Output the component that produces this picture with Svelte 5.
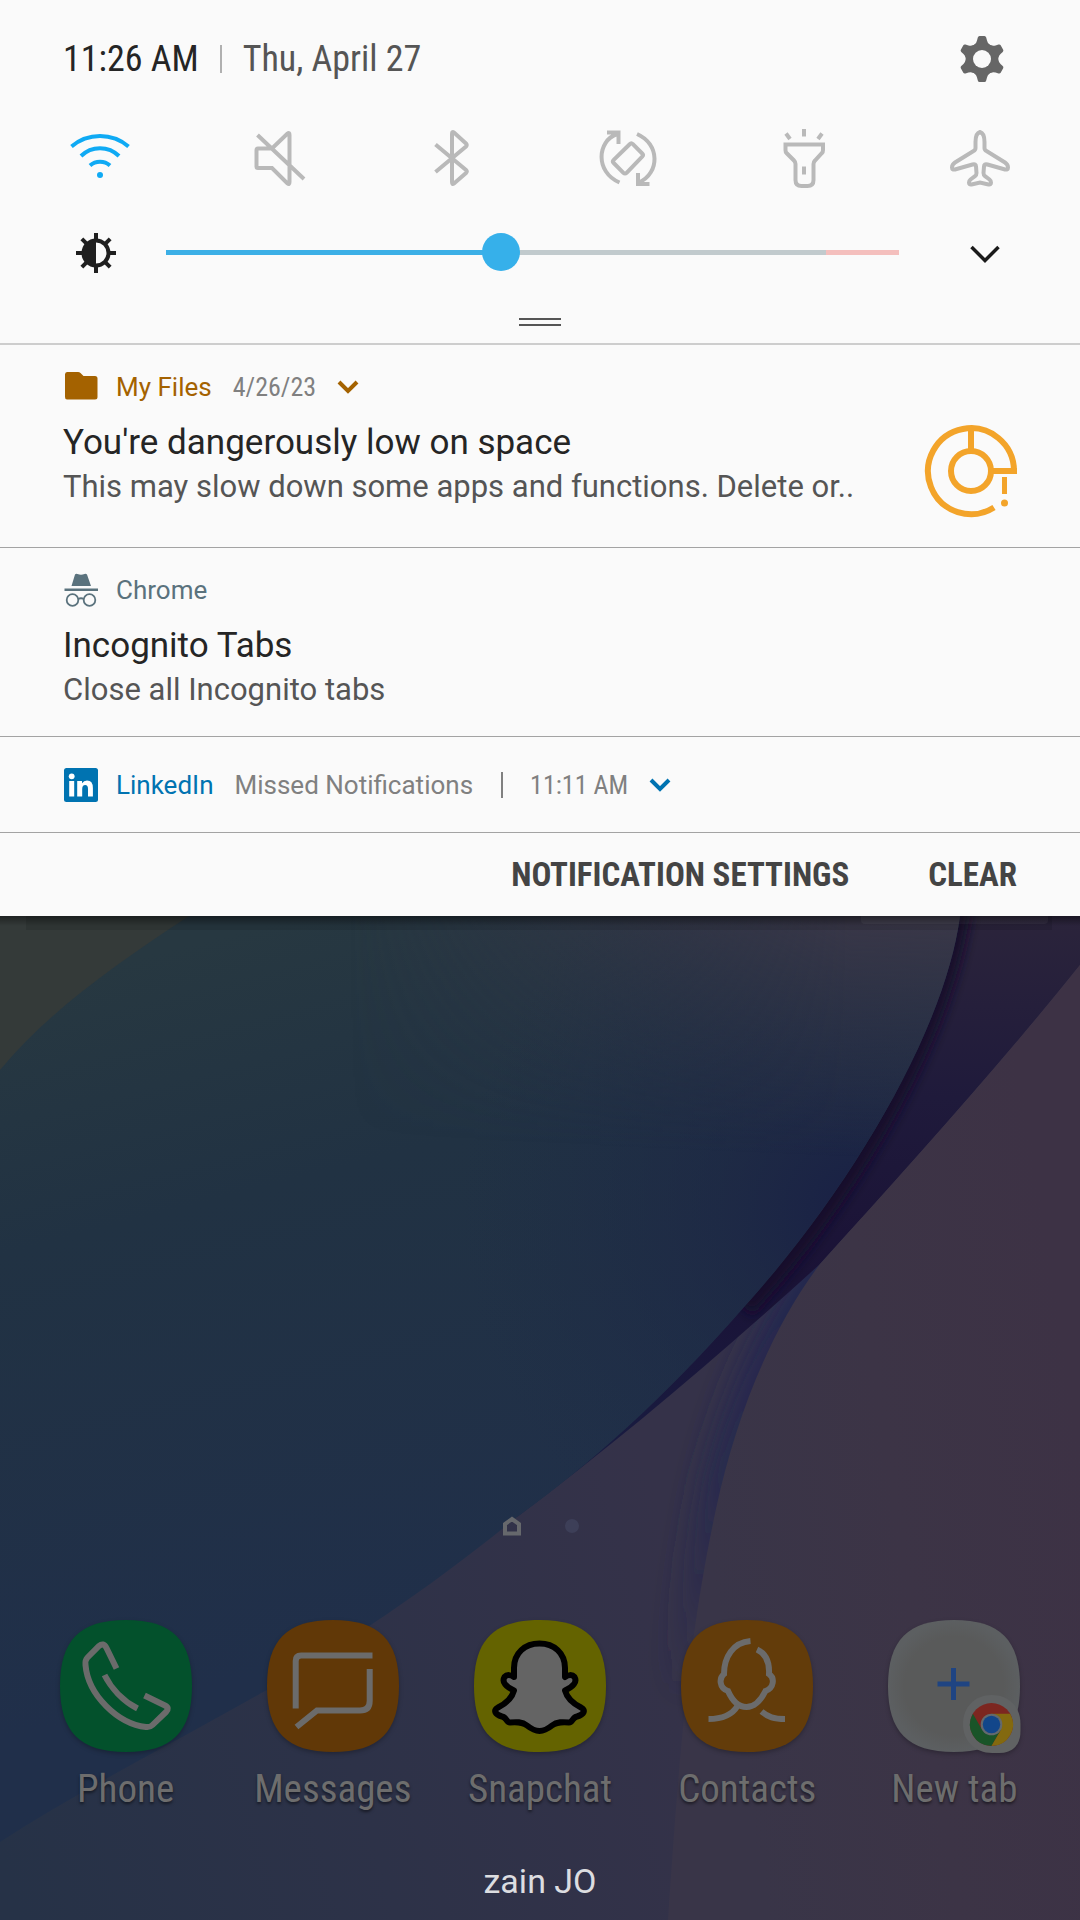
<script lang="ts">
    type App = {
        id: string;
        label: string;
        color: string;
    };

    const toggles = [
        { id: "wifi", label: "Wi-Fi", on: true },
        { id: "mute", label: "Mute", on: false },
        { id: "bluetooth", label: "Bluetooth", on: false },
        { id: "rotate", label: "Auto rotate", on: false },
        { id: "torch", label: "Flashlight", on: false },
        { id: "airplane", label: "Airplane mode", on: false },
    ];

    const apps: App[] = [
        { id: "phone", label: "Phone", color: "#03512c" },
        { id: "messages", label: "Messages", color: "#613807" },
        { id: "snapchat", label: "Snapchat", color: "#646300" },
        { id: "contacts", label: "Contacts", color: "#633c0a" },
        { id: "newtab", label: "New tab", color: "url(#paper)" },
    ];

    let brightness = $state(455);
    let level = $derived(brightness / 10);
</script>

{#snippet chevron()}
    <svg class="chevron" viewBox="0 0 22 14" aria-hidden="true">
        <path d="M2 2l9 9 9-9" />
    </svg>
{/snippet}

{#snippet toggleIcon(id: string)}
    <svg class="toggle_icon" viewBox="0 0 64 64" aria-hidden="true">
        {#if id === "wifi"}
            <path d="M3.500 20.500A44 44 0 0 1 60.500 20.500M13 30A27 27 0 0 1 51 30M22 39.500A15 15 0 0 1 42 39.500" />
            <circle class="solid" cx="32" cy="49" r="3" />
        {:else if id === "mute"}
            <path d="M14 22.500H28L43.500 7.500Q45.500 6 45.500 9V56Q45.500 59 43.500 57.500L28 42H14Q12.500 42 12.500 40.500V24Q12.500 22.500 14 22.500ZM13.500 9L60 53" />
        {:else if id === "bluetooth"}
            <path d="M15.500 18.500L46 44Q47.500 45.500 46 47L34 57.500Q32 59 32 56V8Q32 5 34 6.500L46 17.500Q47.500 19 46 20.500L15.500 46" />
        {:else if id === "rotate"}
            <path d="M23.500 56.500C-1 46 1 15 21 8M11 6.500H22.500V18M41 8C64 18 64 47 43 56.500M42 47V58H53.500" />
            <path d="M33.700 18.200Q35.300 16.600 36.900 18.200L46.200 27.500Q47.800 29.100 46.200 30.700L30.600 46.800Q29 48.400 27.400 46.800L17.700 37Q16.100 35.400 17.700 33.800Z" />
        {:else if id === "torch"}
            <path d="M13.500 18.500H51V24Q51 26 50 27L43 34.500Q41.500 36 41.500 38V54Q41.500 60 35.500 60H29.500Q23.500 60 23.500 54V38Q23.500 36 22 34.500L14.500 27Q13.500 26 13.500 24ZM32 40.500V48.500M32 3V10.500M14 7.500L18 13M50 7.500L46 13" />
        {:else}
            <path d="M32 6C28.500 7 27.500 12 27.500 16V22Q27.500 24 25.500 25L7 36.500Q4 38.500 4 41.500Q4 44 7 43.500L24.500 38.500Q28 37.500 28 40.500L28.500 47Q28.500 49 27 50.200L22.500 53.500Q21 54.700 21 56.500Q21 59 23.500 58.500L32 56.500L40.500 58.500Q43 59 43 56.500Q43 54.700 41.500 53.500L37 50.200Q35.500 49 35.500 47L36 40.500Q36 37.500 39.500 38.500L57 43.500Q60 44 60 41.500Q60 38.500 57 36.500L38.500 25Q36.500 24 36.500 22V16C36.500 12 35.500 7 32 6Z" />
        {/if}
    </svg>
{/snippet}

{#snippet appIcon(app: App)}
    <svg class="app_icon" viewBox="0 0 132 132" aria-hidden="true">
        <path fill={app.color} d="M66 0C112 0 132 20 132 66S112 132 66 132 0 112 0 66 20 0 66 0Z" />
        {#if app.id === "phone"}
            <g class="glyph">
                <path d="M56.500 48.500L46.500 28Q43.500 22 39 26L27.500 37.500Q25 40 25.500 45C28 75 58 104 86 107Q90 107.500 92.500 105L106 92Q110 88 105 85.500L84.500 75.500" />
                <path d="M44.500 55C51 68 63 81 77.500 88.500" />
            </g>
        {:else if app.id === "messages"}
            <g class="glyph">
                <path d="M105.500 35.500H34Q28.700 35.500 28.700 41V88.500" />
                <path d="M102.700 49V81Q102.700 90.500 93 90.500H50L29.500 107" />
            </g>
        {:else if app.id === "snapchat"}
            <path
                class="ghost"
                d="M65.500 23.500C51 23.500 40 33 40 48V57C37 55 33 54 30.500 57C27.500 62 32 67 40 70.500C38 78 31 84 24 87.500C19 90.500 21 94.500 28 96.500C33 97.500 32 102.500 36 102.500C42 102 48 101.500 53 105.500C58 109.500 61 111 65.500 111S73 109.500 78 105.500C83 101.500 89 102 95 102.500C99 102.500 98 97.500 103 96.500C110 94.500 112 90.500 107 87.500C100 84 93 78 91 70.500C99 67 103.500 62 100.500 57C98 54 94 55 91 57V48C91 33 80 23.500 65.500 23.500Z"
            />
        {:else if app.id === "contacts"}
            <g class="glyph">
                <path d="M69.500 21C52 22.500 43 37 43 54C38 58 38 68 47 71C51 80 57 87 65.500 87S80 80 84.500 71C93 68 94 58 88 54C88.500 44 86 34 76 29.500" />
                <path d="M56.500 86C51 95 42 99 27.500 99M80.500 91.500C87 97 93 99 104 99" />
            </g>
        {:else}
            <defs>
                <radialGradient id="paper">
                    <stop offset=".75" stop-color="#595a5a" />
                    <stop offset="1" stop-color="#5c5f61" />
                </radialGradient>
            </defs>
            <path class="plus" d="M65.500 48V80M49.500 64H81.500" />
            <path fill="#606263" d="M103.500 75C122 75 132.500 88 132.500 104V111C132.500 125 125 133 111 133H104C87 133 75 121 75 104S87 75 103.500 75Z" />
            <circle cx="103.500" cy="104.500" r="21.500" fill="#7c2620" />
            <path fill="#195428" d="M84.900 93.700A21.500 21.500 0 0 0 103.500 126L112.800 109.900L94.200 109.900Z" />
            <path fill="#83690f" d="M122.100 93.700A21.500 21.500 0 0 1 103.500 126L112.800 109.900L103.500 93.700Z" />
            <circle cx="103.500" cy="104.500" r="10.800" fill="#63696e" />
            <circle cx="103.500" cy="104.500" r="8.700" fill="#12468a" />
        {/if}
    </svg>
{/snippet}

<div class="screen">
    <div class="shade">
        <!-- Quick settings -->
        <header class="quick">
            <div class="status">
                <span class="status_time">11:26 AM</span>
                <span class="status_rule"></span>
                <span class="status_date">Thu, April 27</span>
                <button class="icon-button status_settings" aria-label="Settings">
                    <svg viewBox="-24 -24 48 48" aria-hidden="true">
                        {#each [0, 60, 120, 180, 240, 300] as angle}
                            <path
                                fill="#666"
                                transform="rotate({angle})"
                                d="M0 0L-11.500-12.500Q-6-14-5-18.500L-4.200-21.500Q-3.800-23-2.500-23H2.500Q3.800-23 4.200-21.500L5-18.500Q6-14 11.500-12.500Z"
                            />
                        {/each}
                        <circle r="9" fill="#fafafa" />
                    </svg>
                </button>
            </div>

            <div class="toggles">
                {#each toggles as toggle}
                    <button class="toggle" class:toggle-on={toggle.on} aria-label={toggle.label} aria-pressed={toggle.on}>
                        {@render toggleIcon(toggle.id)}
                    </button>
                {/each}
            </div>

            <div class="brightness">
                <svg class="brightness_icon" viewBox="-24 -24 48 48" aria-hidden="true">
                    <circle r="12.500" fill="none" stroke="#1f1f1f" stroke-width="4" />
                    <path d="M0-13A13 13 0 0 0 0 13Z" fill="#1f1f1f" />
                    {#each [0, 45, 90, 135, 180, 225, 270, 315] as angle}
                        <path d="M0-13V-20" stroke="#1f1f1f" stroke-width="4" transform="rotate({angle})" />
                    {/each}
                </svg>
                <input
                    class="brightness_slider"
                    type="range"
                    min="0"
                    max="1000"
                    aria-label="Brightness"
                    bind:value={brightness}
                    style="--level: {level}%"
                />
                <button class="icon-button brightness_more" aria-label="More brightness options">
                    <svg viewBox="0 0 48 48" aria-hidden="true">
                        <path d="M10.500 18L24 31.500 37.500 18" fill="none" stroke="#1a1a1a" stroke-width="3.500" />
                    </svg>
                </button>
            </div>

            <div class="handle"></div>
        </header>

        <!-- Notifications -->
        <article class="note note-large">
            <div class="note_head note_head-files">
                <svg class="note_icon" viewBox="0 0 34 34" aria-hidden="true">
                    <path fill="currentColor" d="M3 2H14Q15.500 2 16.500 3L19.500 6H31Q33.500 6 33.500 8.500V27Q33.500 29.500 31 29.500H3Q1 29.500 1 27V4.500Q1 2 3 2Z" />
                </svg>
                <span class="note_app">My Files</span>
                <span class="note_meta note_meta-narrow">4/26/23</span>
                {@render chevron()}
            </div>
            <div class="note_body">
                <div class="note_text">
                    <h2 class="note_title">You're dangerously low on space</h2>
                    <p class="note_desc">This may slow down some apps and functions. Delete or..</p>
                </div>
                <svg class="note_picture" viewBox="0 0 92 92" aria-hidden="true">
                    <path d="M89 49V46A43 43 0 1 0 69 82.500M92 46H66M46 3V26" />
                    <circle cx="46" cy="46" r="20" />
                    <path class="mark" d="M79.500 52V69" />
                    <circle class="dot" cx="79.500" cy="78" r="3.500" />
                </svg>
            </div>
        </article>

        <article class="note">
            <div class="note_head note_head-chrome">
                <svg class="note_icon" viewBox="0 0 34 34" aria-hidden="true">
                    <path fill="currentColor" d="M11 1.500Q12 .5 13.500 1Q17 2.300 20.500 1Q22 .5 23 1.500L27 13H7.500ZM.5 15.500H34V18H.5Z" />
                    <circle cx="8.500" cy="27" r="5.800" fill="none" stroke="currentColor" stroke-width="1.800" />
                    <circle cx="25.500" cy="27" r="5.800" fill="none" stroke="currentColor" stroke-width="1.800" />
                    <path d="M14 26Q17 24.500 20 26" fill="none" stroke="currentColor" stroke-width="1.800" />
                </svg>
                <span class="note_app">Chrome</span>
            </div>
            <div class="note_text">
                <h2 class="note_title">Incognito Tabs</h2>
                <p class="note_desc">Close all Incognito tabs</p>
            </div>
        </article>

        <article class="note note-collapsed">
            <div class="note_head note_head-linkedin">
                <svg class="note_icon" viewBox="0 0 34 34" aria-hidden="true">
                    <rect width="34" height="34" rx="2.500" fill="currentColor" />
                    <circle cx="7.700" cy="8.300" r="2.900" fill="#fff" />
                    <path fill="#fff" d="M5.200 13H10.200V28.500H5.200ZM13.200 13H18V15.200Q19.800 12.600 23 12.600Q28.900 12.600 28.900 20V28.500H24V21Q24 17 21.200 17Q18.200 17 18.200 21V28.500H13.200Z" />
                </svg>
                <span class="note_app">LinkedIn</span>
                <span class="note_meta">Missed Notifications</span>
                <span class="note_rule"></span>
                <span class="note_meta note_meta-narrow">11:11 AM</span>
                {@render chevron()}
            </div>
        </article>

        <footer class="actions">
            <button class="action">NOTIFICATION SETTINGS</button>
            <button class="action">CLEAR</button>
        </footer>
    </div>

    <!-- Home screen -->
    <main class="home">
        <svg class="wallpaper" viewBox="0 916 1080 1004" preserveAspectRatio="none" aria-hidden="true">
            <defs>
                <linearGradient id="sail" gradientUnits="userSpaceOnUse" x1="300" y1="916" x2="480" y2="1620">
                    <stop offset="0" stop-color="#273841" />
                    <stop offset=".35" stop-color="#213243" />
                    <stop offset="1" stop-color="#202f4a" />
                </linearGradient>
                <linearGradient id="haze" gradientUnits="userSpaceOnUse" x1="700" y1="916" x2="690" y2="1150">
                    <stop offset="0" stop-color="#393748" />
                    <stop offset="1" stop-color="#2b3145" stop-opacity="0" />
                </linearGradient>
                <linearGradient id="haze-side" gradientUnits="userSpaceOnUse" x1="350" y1="0" x2="850" y2="0">
                    <stop offset="0" stop-color="#000" />
                    <stop offset="1" stop-color="#fff" />
                </linearGradient>
                <mask id="haze-mask" maskUnits="userSpaceOnUse" x="0" y="916" width="1080" height="1004">
                    <rect y="916" width="1080" height="1004" fill="url(#haze-side)" />
                </mask>
                <radialGradient id="deep" gradientUnits="userSpaceOnUse" cx="860" cy="1210" r="400">
                    <stop offset="0" stop-color="#192045" />
                    <stop offset=".35" stop-color="#1c2545" stop-opacity=".6" />
                    <stop offset="1" stop-color="#1d2b47" stop-opacity="0" />
                </radialGradient>
                <linearGradient id="fold" x1="0" x2="0" y1="0" y2="1">
                    <stop offset="0" stop-color="#2b243b" />
                    <stop offset=".3" stop-color="#1f1a3b" />
                    <stop offset=".6" stop-color="#1a1236" />
                    <stop offset="1" stop-color="#182045" />
                </linearGradient>
                <linearGradient id="petal" gradientUnits="userSpaceOnUse" x1="700" y1="1500" x2="1080" y2="1440">
                    <stop offset="0" stop-color="#393548" />
                    <stop offset=".5" stop-color="#3c3446" />
                    <stop offset="1" stop-color="#3d3245" />
                </linearGradient>
                <linearGradient id="base" gradientUnits="userSpaceOnUse" x1="0" y1="1850" x2="700" y2="1650">
                    <stop offset="0" stop-color="#263247" />
                    <stop offset=".5" stop-color="#2d3248" />
                    <stop offset="1" stop-color="#353249" />
                </linearGradient>
                <linearGradient id="crease" gradientUnits="userSpaceOnUse" x1="0" y1="1260" x2="0" y2="1700">
                    <stop offset="0" stop-color="#232750" />
                    <stop offset=".5" stop-color="#27294e" />
                    <stop offset="1" stop-color="#2d2c4c" stop-opacity="0" />
                </linearGradient>
                <linearGradient id="cast" x1="0" x2="0" y1="0" y2="1">
                    <stop offset="0" stop-color="#000" stop-opacity=".4" />
                    <stop offset="1" stop-color="#000" stop-opacity="0" />
                </linearGradient>
                <filter id="soften" filterUnits="userSpaceOnUse" x="0" y="800" width="1200" height="1200">
                    <feGaussianBlur stdDeviation="14" />
                </filter>
                <filter id="soften-less" filterUnits="userSpaceOnUse" x="0" y="800" width="1200" height="1200">
                    <feGaussianBlur stdDeviation="6" />
                </filter>
                <clipPath id="fold-clip">
                    <path d="M940 916H1080V965C1000 1065 910 1165 820 1264C720 1355 620 1440 517 1517L600 1300Z" />
                </clipPath>
            </defs>
            <rect y="916" width="1080" height="1004" fill="url(#base)" />
            <path
                d="M830 1250C770 1330 735 1420 716 1509C690 1630 680 1740 668 1920"
                fill="none"
                stroke="url(#crease)"
                stroke-width="36"
                filter="url(#soften)"
            />
            <g clip-path="url(#fold-clip)">
                <rect x="500" y="916" width="580" height="604" fill="url(#fold)" />
                <path
                    d="M960 900C945 1030 850 1190 744 1307"
                    fill="none"
                    stroke="#130b2b"
                    stroke-width="24"
                    filter="url(#soften-less)"
                />
            </g>
            <path fill="url(#petal)" d="M1080 965C1000 1065 910 1165 820 1264C770 1330 735 1420 716 1509C690 1630 680 1740 668 1920H1080Z" />
            {#each ["url(#sail)", "url(#deep)"] as fill}
                <path {fill} d="M0 916H960C945 1030 850 1190 744 1307C680 1380 610 1450 517 1517C430 1588 350 1641 265 1691C170 1745 80 1790 0 1842Z" />
            {/each}
            <path fill="url(#haze)" mask="url(#haze-mask)" d="M0 916H960C945 1030 850 1190 744 1307H0Z" />
            <path fill="#343a39" d="M0 916H189C115 965 50 1010 0 1070Z" />
            <path fill="#000" fill-opacity=".1" d="M26 916H1052V930H26Z" />
            <path fill="#fff" fill-opacity=".05" d="M861 916H1048V920Q1048 924 1044 924H865Q861 924 861 920Z" />
            <rect y="916" width="1080" height="10" fill="url(#cast)" />
        </svg>

        <div class="pages">
            <svg class="pages_home" viewBox="0 0 20 20" aria-hidden="true">
                <path d="M3 17.500V8L10 3 17 8V17.500Z" />
            </svg>
            <span class="pages_dot"></span>
        </div>

        <nav class="dock">
            {#each apps as app}
                <a class="app" href="#{app.id}">
                    {@render appIcon(app)}
                    <span class="app_label">{app.label}</span>
                </a>
            {/each}
        </nav>

        <p class="carrier">zain JO</p>
    </main>
</div>

<style>
    :global(body) {
        margin: 0;
        background: #2d3247;
    }

    .screen {
        display: flex;
        flex-direction: column;
        min-height: 100vh;
        font-family: Roboto, "Liberation Sans", sans-serif;
        color: #252525;
    }

    button {
        margin: 0;
        padding: 0;
        border: 0;
        background: none;
        font: inherit;
        color: inherit;
    }

    svg {
        display: block;
        flex: none;
        overflow: visible;
    }

    .shade {
        background: #fafafa;
    }

    .icon-button {
        width: 48px;
        height: 48px;
    }

    /* Quick settings */
    .quick {
        padding-top: 34px;
        border-bottom: 2px solid #cdcdcd;
    }

    .status {
        display: flex;
        align-items: center;
        height: 50px;
        padding: 0 74px 0 63px;
        font-family: "Roboto Condensed", Roboto, sans-serif;
        font-size: 36px;
        line-height: 50px;
    }

    .status_rule {
        width: 2px;
        height: 28px;
        margin: 0 21px;
        background: #b0b0b0;
    }

    .status_date {
        color: #555;
    }

    .status_settings {
        margin-left: auto;
    }

    .toggles {
        display: flex;
        justify-content: space-between;
        padding: 42px 68px 0;
    }

    .toggle {
        width: 64px;
        height: 64px;
        color: #b9b9b9;
    }

    .toggle-on {
        color: #0faaf4;
    }

    .toggle_icon {
        fill: none;
        stroke: currentColor;
        stroke-width: 4;
    }

    .toggle_icon .solid {
        fill: currentColor;
        stroke: none;
    }

    .brightness {
        display: flex;
        align-items: center;
        padding: 39px 71px 0 72px;
    }

    .brightness_icon {
        width: 48px;
        height: 48px;
    }

    .brightness_slider {
        flex: 1;
        min-width: 0;
        height: 38px;
        margin: 0 62px 2px 46px;
        appearance: none;
        background: none;
    }

    .brightness_slider::-webkit-slider-runnable-track {
        height: 5px;
        background: linear-gradient(
            to right,
            #3cafe6 var(--level),
            #c1cacd var(--level) 90%,
            #f4bfbd 90%
        );
    }

    .brightness_slider::-webkit-slider-thumb {
        appearance: none;
        width: 38px;
        height: 38px;
        margin-top: -17px;
        border-radius: 50%;
        background: #36b0ea;
    }

    .handle {
        width: 42px;
        height: 4px;
        margin: 41px auto 17px;
        border-top: 2px solid #555;
        border-bottom: 2px solid #555;
    }

    /* Notifications */
    .note {
        padding: 26px 63px 24px;
        border-bottom: 1px solid #a3a3a3;
    }

    .note-large {
        padding-bottom: 30px;
    }

    .note-collapsed {
        padding: 32px 63px 31px;
    }

    .note_head {
        display: flex;
        align-items: center;
        height: 32px;
        font-size: 26px;
        line-height: 32px;
    }

    .note_head-files {
        color: #a46200;
    }

    .note_head-chrome {
        color: #5a727d;
    }

    .note_head-linkedin {
        color: #0073b1;
    }

    .note_icon {
        width: 34px;
        height: 34px;
        margin: 0 18px 0 1px;
    }

    .note_meta {
        margin-left: 21px;
        color: #808080;
    }

    .note_meta-narrow {
        font-family: "Roboto Condensed", Roboto, sans-serif;
    }

    .note_rule {
        width: 2px;
        height: 26px;
        margin: 0 6px 0 28px;
        background: #808080;
    }

    .chevron {
        width: 22px;
        height: 14px;
        margin-left: 21px;
        fill: none;
        stroke: currentColor;
        stroke-width: 4;
    }

    .note_body {
        display: flex;
        justify-content: space-between;
        align-items: flex-start;
    }

    .note_text {
        min-width: 0;
    }

    .note_body,
    .note_head + .note_text {
        margin-top: 18px;
    }

    .note_title {
        margin: 0;
        font-size: 35px;
        font-weight: 400;
        line-height: 44px;
        color: #252525;
    }

    .note_desc {
        margin: 0;
        font-size: 31px;
        line-height: 44px;
        color: #555;
    }

    .note_picture {
        width: 92px;
        height: 92px;
        margin-top: 4px;
        fill: none;
        stroke: #f3a42a;
        stroke-width: 6;
    }

    .note_picture .mark {
        stroke-width: 5;
    }

    .note_picture .dot {
        fill: #f3a42a;
        stroke: none;
    }

    .actions {
        display: flex;
        justify-content: flex-end;
        gap: 79px;
        padding: 0 63px;
    }

    .action {
        height: 83px;
        font-family: "Roboto Condensed", Roboto, sans-serif;
        font-size: 33px;
        font-weight: 700;
        color: #444;
    }

    /* Home screen */
    .home {
        position: relative;
        display: flex;
        flex: 1;
        flex-direction: column;
        justify-content: flex-end;
        padding: 0 22px 19px;
    }

    .wallpaper {
        position: absolute;
        inset: 0;
        width: 100%;
        height: 100%;
        overflow: hidden;
    }

    .pages,
    .dock,
    .carrier {
        position: relative;
    }

    .pages {
        display: flex;
        justify-content: center;
        align-items: center;
        gap: 43px;
    }

    .pages_home {
        width: 20px;
        height: 20px;
        fill: none;
        stroke: #66686c;
        stroke-width: 4;
    }

    .pages_dot {
        width: 14px;
        height: 14px;
        border-radius: 50%;
        background: #3d3f58;
    }

    .dock {
        display: grid;
        grid-template-columns: repeat(5, 1fr);
        margin-top: 84px;
    }

    .app {
        display: flex;
        flex-direction: column;
        align-items: center;
        gap: 15px;
        color: #6d6d6d;
        text-decoration: none;
    }

    .app_icon {
        width: 132px;
        height: 132px;
        filter: drop-shadow(0 2px 2px rgba(0, 0, 0, 0.25));
    }

    .app_icon .glyph {
        fill: none;
        stroke: #6b6b6b;
        stroke-width: 6;
    }

    .app_icon .ghost {
        fill: #646464;
        stroke: #000;
        stroke-width: 6;
        stroke-linejoin: round;
    }

    .app_icon .plus {
        stroke: #1f4482;
        stroke-width: 5;
    }

    .app_label {
        font-family: "Roboto Condensed", Roboto, sans-serif;
        font-size: 39px;
        line-height: 44px;
        text-shadow: 0 2px 3px rgba(0, 0, 0, 0.5);
    }

    .carrier {
        margin: 50px 0 0;
        font-size: 34px;
        line-height: 40px;
        text-align: center;
        color: #dcdde0;
    }
</style>
